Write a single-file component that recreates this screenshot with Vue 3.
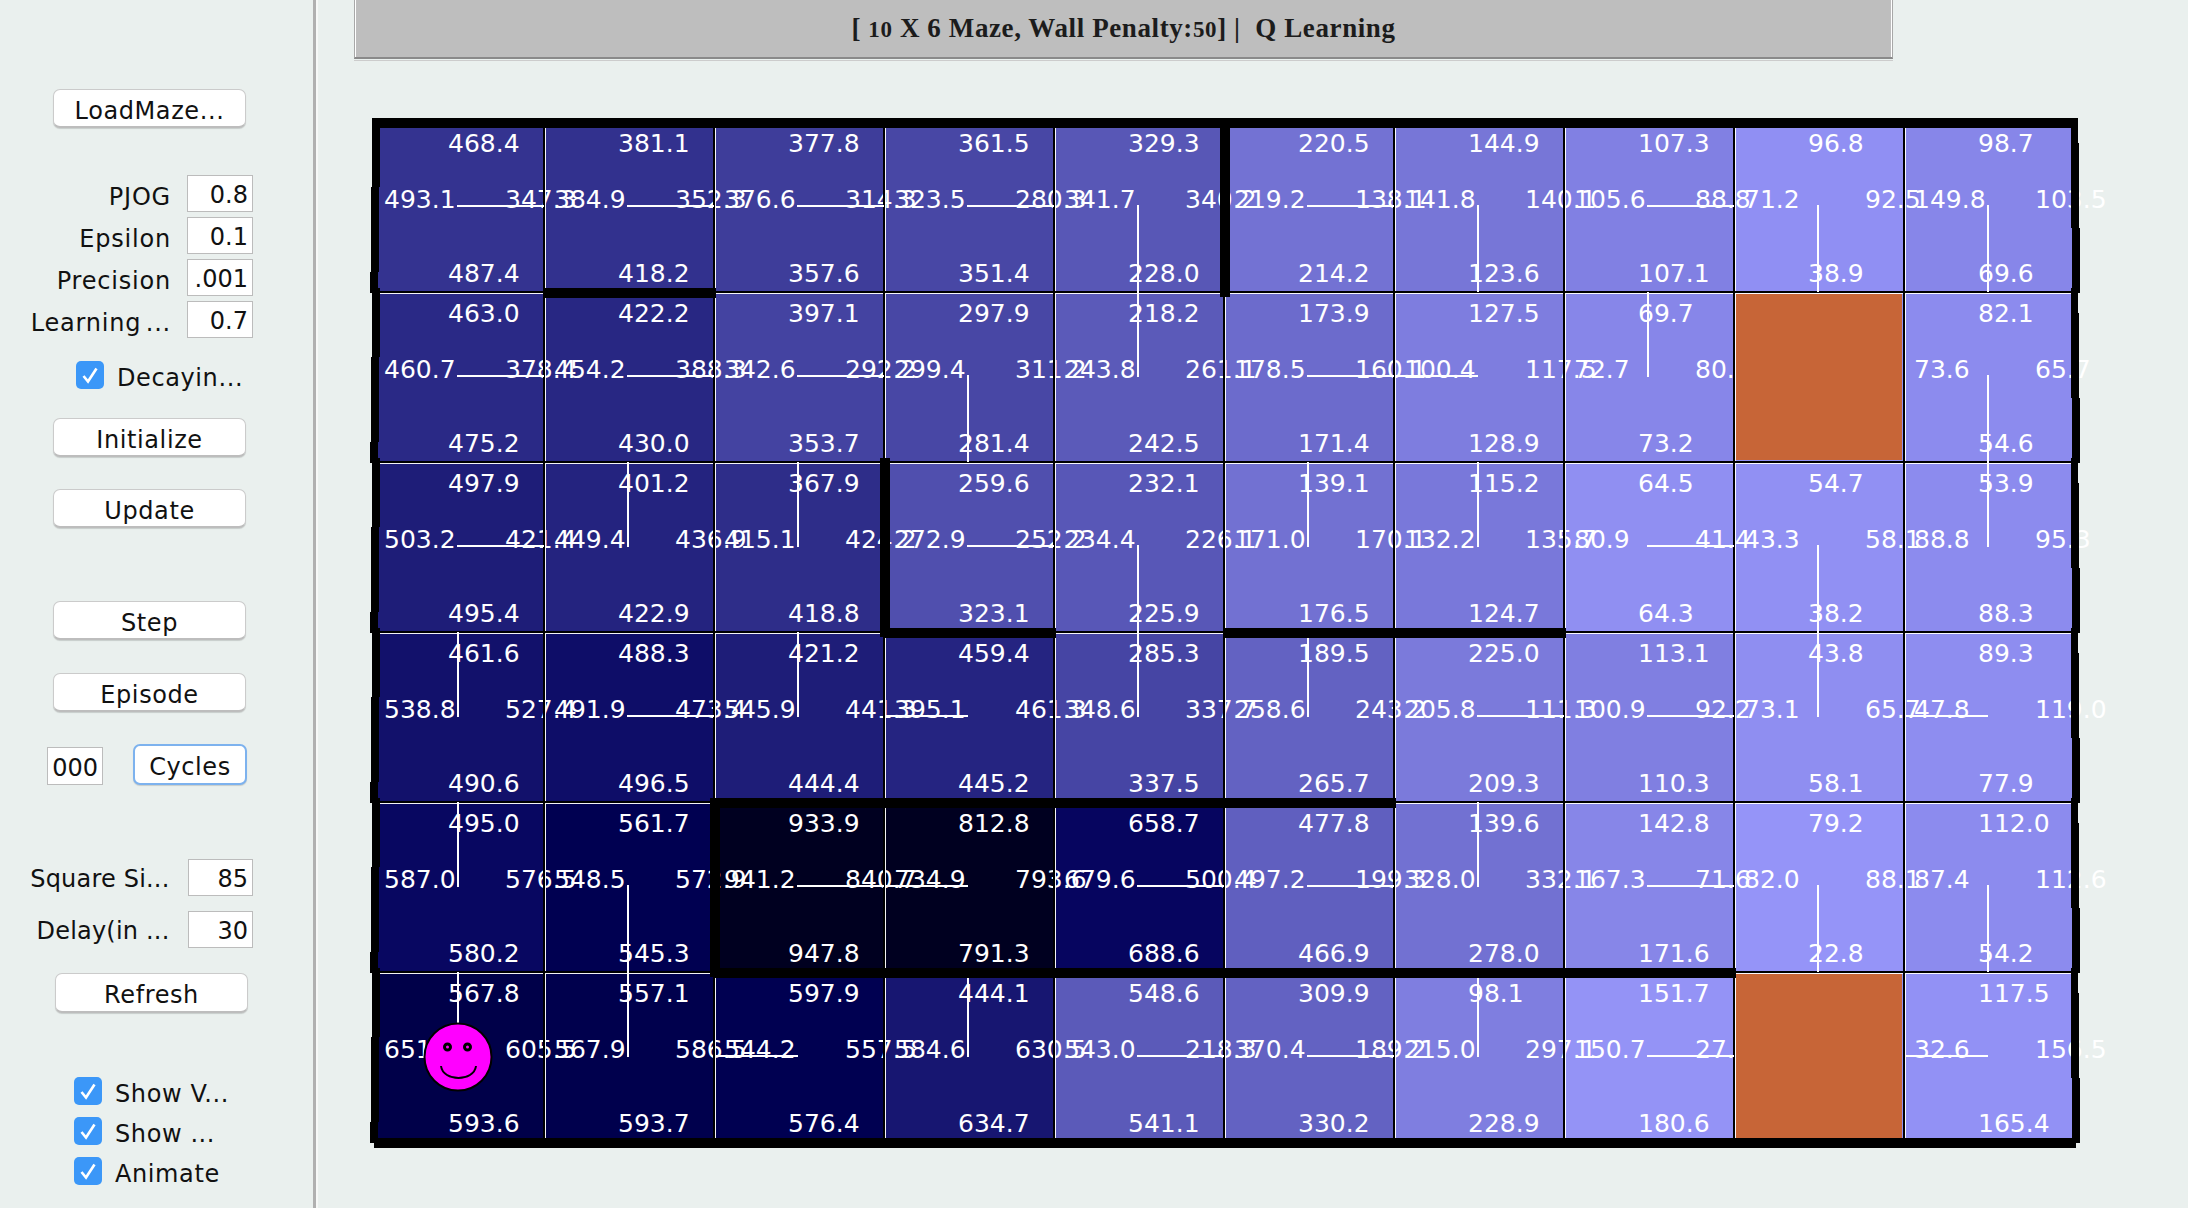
<script setup>
// each square: [top, left, right, bottom], null = goal square
const maze = [
  [['468.4','493.1','347.3','487.4'],['381.1','384.9','352.3','418.2'],['377.8','376.6','314.3','357.6'],['361.5','323.5','280.3','351.4'],['329.3','341.7','340.2','228.0'],['220.5','219.2','138.1','214.2'],['144.9','141.8','140.1','123.6'],['107.3','105.6','88.8','107.1'],['96.8','71.2','92.5','38.9'],['98.7','149.8','103.5','69.6']],
  [['463.0','460.7','378.4','475.2'],['422.2','454.2','388.3','430.0'],['397.1','342.6','292.2','353.7'],['297.9','299.4','311.2','281.4'],['218.2','243.8','261.1','242.5'],['173.9','178.5','160.1','171.4'],['127.5','100.4','117.5','128.9'],['69.7','72.7','80.3','73.2'],null,['82.1','73.6','65.7','54.6']],
  [['497.9','503.2','421.4','495.4'],['401.2','449.4','436.9','422.9'],['367.9','415.1','424.2','418.8'],['259.6','272.9','252.2','323.1'],['232.1','234.4','226.1','225.9'],['139.1','171.0','170.1','176.5'],['115.2','132.2','135.7','124.7'],['64.5','80.9','41.4','64.3'],['54.7','43.3','58.1','38.2'],['53.9','88.8','95.3','88.3']],
  [['461.6','538.8','527.4','490.6'],['488.3','491.9','473.4','496.5'],['421.2','545.9','441.3','444.4'],['459.4','395.1','461.3','445.2'],['285.3','348.6','337.7','337.5'],['189.5','258.6','243.2','265.7'],['225.0','205.8','111.3','209.3'],['113.1','100.9','92.2','110.3'],['43.8','73.1','65.7','58.1'],['89.3','47.8','119.0','77.9']],
  [['495.0','587.0','576.5','580.2'],['561.7','548.5','572.9','545.3'],['933.9','941.2','840.7','947.8'],['812.8','734.9','793.6','791.3'],['658.7','679.6','500.4','688.6'],['477.8','497.2','199.3','466.9'],['139.6','328.0','332.1','278.0'],['142.8','167.3','71.6','171.6'],['79.2','82.0','88.1','22.8'],['112.0','87.4','112.6','54.2']],
  [['567.8','651.4','605.5','593.6'],['557.1','567.9','586.5','593.7'],['597.9','544.2','557.5','576.4'],['444.1','584.6','630.5','634.7'],['548.6','543.0','218.3','541.1'],['309.9','370.4','189.2','330.2'],['98.1','215.0','297.1','228.9'],['151.7','150.7','27.4','180.6'],null,['117.5','32.6','156.5','165.4']]
]

const SQ = 170
const dirs = ['n', 'w', 'e', 's']

const cells = maze.flatMap((row, r) => row.map((q, c) => {
  if (!q) return { key: `${r}-${c}`, goal: true, fill: '#9090f2' }
  const nums = q.map(Number)
  const v = Math.min(...nums)
  const rg = Math.max(0, Math.round(156 - 0.3 * v))
  const b = Math.max(32, Math.round(255 - 0.32 * v))
  return { key: `${r}-${c}`, q, dir: dirs[nums.indexOf(v)], fill: `rgb(${rg},${Math.max(0, rg - 1)},${b})` }
}))

// wall pieces in board pixels, the original draws them slightly skewed per square
const box = (x, y, w, h) => ({ left: x + 'px', top: y + 'px', width: w + 'px', height: h + 'px' })
const walls = []
walls.push(box(-2, -4, 1704, 10))
walls.push(box(0, 1016, 1702, 10))
for (let r = 0; r < 6; r++) {
  const y = r * SQ
  walls.push(box(-2, y - 4, 8, 69), box(-3, y + 65, 8, 85), box(-4, y + 150, 8, 21))
  walls.push(box(1697, y - 4, 7, 25), box(1697, y + 21, 8, 85), box(1698, y + 106, 8, 65))
}
const hWall = (boundary, from, to) => walls.push(box(from * SQ - 1, boundary * SQ - 4, (to - from) * SQ + 3, 10))
const vWall = (boundary, row) => walls.push(box(boundary * SQ - 4, row * SQ - 4, 10, SQ + 9))
hWall(1, 1, 2)
hWall(3, 3, 4)
hWall(3, 5, 7)
hWall(4, 2, 6)
hWall(5, 2, 8)
vWall(5, 0)
vWall(3, 2)
vWall(2, 4)

const fields = [
  { label: 'PJOG', value: '0.8' },
  { label: 'Epsilon', value: '0.1' },
  { label: 'Precision', value: '.001' },
  { label: 'Learning ...', value: '0.7' }
]
const checks = ['Show V...', 'Show ...', 'Animate']
</script>

<template>
  <div class="app">
    <aside class="sidebar">
      <button class="btn load">LoadMaze...</button>

      <div class="fields">
        <div v-for="f in fields" :key="f.label" class="field">
          <span class="field-label">{{ f.label }}</span>
          <div class="input"><span>{{ f.value }}</span></div>
        </div>
      </div>

      <label class="check decay">
        <span class="box"><svg width="28" height="28" viewBox="0 0 28 28"><path d="M7.5 15 L12 20.5 L20.5 7.5" fill="none" stroke="#fff" stroke-width="2.6"/></svg></span>
        <span class="check-text">Decayin...</span>
      </label>

      <button class="btn init">Initialize</button>
      <button class="btn update">Update</button>
      <button class="btn step">Step</button>
      <button class="btn episode">Episode</button>

      <div class="cycles">
        <div class="input small"><span>000</span></div>
        <button class="btn focus">Cycles</button>
      </div>

      <div class="fields lower">
        <div class="field">
          <span class="field-label">Square Si...</span>
          <div class="input"><span>85</span></div>
        </div>
        <div class="field delay">
          <span class="field-label">Delay(in ...</span>
          <div class="input"><span>30</span></div>
        </div>
      </div>

      <button class="btn refresh">Refresh</button>

      <div class="checks">
        <label v-for="c in checks" :key="c" class="check">
          <span class="box"><svg width="28" height="28" viewBox="0 0 28 28"><path d="M7.5 15 L12 20.5 L20.5 7.5" fill="none" stroke="#fff" stroke-width="2.6"/></svg></span>
          <span class="check-text">{{ c }}</span>
        </label>
      </div>
    </aside>

    <main class="main">
      <header class="title-wrap">
        <div class="title">[ <span class="os">10</span> X 6 Maze, Wall Penalty:<span class="os">50</span>] |&nbsp; Q Learning</div>
      </header>

      <div class="board">
        <div v-for="cell in cells" :key="cell.key" class="cell" :style="{ background: cell.fill }">
          <div v-if="cell.goal" class="goal"></div>
          <template v-else>
            <span class="val top">{{ cell.q[0] }}</span>
            <span class="val left">{{ cell.q[1] }}</span>
            <span class="val right">{{ cell.q[2] }}</span>
            <span class="val bottom">{{ cell.q[3] }}</span>
            <i class="policy" :class="cell.dir"></i>
          </template>
        </div>

        <div v-for="(w, i) in walls" :key="i" class="wall" :style="w"></div>

        <svg class="agent" width="70" height="70" viewBox="0 0 70 70">
          <ellipse cx="35" cy="35" rx="33.5" ry="33.5" fill="#ff00ff" stroke="#000" stroke-width="2"/>
          <circle cx="24.5" cy="25" r="3" fill="#ff00ff" stroke="#000" stroke-width="3"/>
          <circle cx="44.5" cy="25" r="3" fill="#ff00ff" stroke="#000" stroke-width="3"/>
          <path d="M18 44 C20 60 51 60 53 44" fill="none" stroke="#000" stroke-width="2"/>
        </svg>
      </div>
    </main>
  </div>
</template>

<style>
html, body {
  margin: 0;
  background: #eaf0ee;
  overflow: hidden;
}
</style>

<style scoped>
.app {
  display: flex;
  width: 2188px;
  height: 1208px;
  background: #eaf0ee;
  font-family: "DejaVu Sans", sans-serif;
  font-size: 24px;
  color: #111;
  overflow: hidden;
}

.sidebar {
  box-sizing: border-box;
  width: 316px;
  height: 1208px;
  padding-top: 89px;
  border-right: 3px solid #b0b0b0;
  display: flex;
  flex-direction: column;
  align-items: flex-start;
  flex-shrink: 0;
}

.btn {
  box-sizing: border-box;
  display: block;
  width: 193px;
  height: 39px;
  margin: 0 0 0 53px;
  padding: 4px 0 0;
  background: #fff;
  border: 1px solid #cbcbcb;
  border-bottom: 2px solid #bdbdbd;
  border-radius: 7px;
  box-shadow: 0 1px 1px rgba(0, 0, 0, 0.15);
  font: inherit;
  color: inherit;
  letter-spacing: 0.6px;
  line-height: 34px;
  text-align: center;
}
.init { margin-top: 29px; }
.update { margin-top: 32px; }
.step { margin-top: 73px; }
.episode { margin-top: 33px; }
.refresh { margin: 25px 0 0 55px; height: 40px; }

.fields {
  margin-top: 47px;
  display: flex;
  flex-direction: column;
  gap: 5px;
}
.field {
  display: flex;
  align-items: center;
  width: 253px;
}
.field-label {
  box-sizing: border-box;
  width: 171px;
  padding-top: 6px;
  text-align: right;
  white-space: nowrap;
  letter-spacing: 0.8px;
  word-spacing: -4px;
}
.input {
  box-sizing: border-box;
  width: 66px;
  height: 37px;
  margin-left: 16px;
  background: #fff;
  border: 1px solid #bcbcbc;
  padding: 3px 4px 0 0;
  display: flex;
  justify-content: flex-end;
  align-items: center;
  overflow: hidden;
  white-space: nowrap;
}
.input span { flex-shrink: 0; }

.lower { margin-top: 74px; gap: 15px; }
.lower .field-label {
  width: 171px;
  padding-top: 2px;
  letter-spacing: 0.2px;
  word-spacing: 0;
}
.lower .input { margin-left: 18px; }
.delay .field-label { width: 171px; }

.cycles {
  margin-top: 32px;
  display: flex;
  align-items: flex-start;
}
.input.small {
  width: 56px;
  height: 38px;
  margin: 3px 0 0 47px;
}
.btn.focus {
  width: 114px;
  height: 41px;
  margin-left: 30px;
  border: 2px solid #7db2ee;
}

.check {
  display: flex;
  align-items: center;
  gap: 13px;
  height: 28px;
  white-space: nowrap;
}
.check-text {
  padding-top: 5px;
  letter-spacing: 0.6px;
}
.decay { margin: 23px 0 0 76px; }
.box {
  width: 28px;
  height: 28px;
  border-radius: 5px;
  background: #3b97f8;
  flex-shrink: 0;
}
.box svg { display: block; }
.checks {
  margin: 64px 0 0 74px;
  display: flex;
  flex-direction: column;
  gap: 12px;
}

.main {
  flex: 1;
  border-left: 2px solid #f6f8f7;
  min-width: 0;
}

.title-wrap {
  box-sizing: border-box;
  width: 1539px;
  height: 61px;
  margin-left: 36px;
  border-bottom: 1px solid #cccccc;
  padding-bottom: 1px;
}
.title {
  box-sizing: border-box;
  height: 59px;
  background: #bebebe;
  border-left: 1px solid #a8a8a8;
  border-right: 1px solid #a8a8a8;
  border-bottom: 2px solid #8a8a8a;
  box-shadow: inset 1px 0 0 #fff, inset -1px 0 0 #fff;
  text-align: center;
  font-family: "Liberation Serif", serif;
  font-weight: 700;
  font-size: 27px;
  letter-spacing: 0.6px;
  line-height: 56px;
  color: #1c1c1c;
}
.os { font-size: 23px; }

.board {
  position: relative;
  width: 1700px;
  height: 1020px;
  margin: 61px 0 0 56px;
  display: grid;
  grid-template-columns: repeat(10, 170px);
  grid-template-rows: repeat(6, 170px);
}

.cell { position: relative; }
/* black then white hairline on the upper and left side of every square */
.cell::before {
  content: "";
  position: absolute;
  left: -1px;
  top: -1px;
  right: 0;
  bottom: 0;
  border-left: 2px solid #000;
  border-top: 2px solid #000;
  box-shadow: inset 1px 1px 0 rgba(255, 255, 255, 0.95);
  z-index: 3;
  pointer-events: none;
}

.goal {
  position: absolute;
  left: 2px;
  top: 2px;
  right: 2px;
  bottom: 2px;
  background: #c76537;
  z-index: 3;
}

.val {
  position: absolute;
  z-index: 2;
  color: #fff;
  font-size: 25px;
  line-height: 30px;
  white-space: nowrap;
}
.val.top { left: 74px; top: 7px; }
.val.left { left: 10px; top: 63px; }
.val.right { left: 131px; top: 63px; }
.val.bottom { left: 74px; top: 137px; }

.policy {
  position: absolute;
  background: #fff;
  z-index: 4;
}
.policy.e { left: 83px; width: 87px; top: 83px; height: 2px; }
.policy.w { left: 2px; width: 82px; top: 83px; height: 2px; }
.policy.n { left: 83px; width: 2px; top: 0; height: 85px; }
.policy.s { left: 83px; width: 2px; top: 83px; height: 87px; }

.wall {
  position: absolute;
  background: #000;
  z-index: 5;
}

.agent {
  position: absolute;
  left: 49px;
  top: 900px;
  z-index: 6;
}
</style>
